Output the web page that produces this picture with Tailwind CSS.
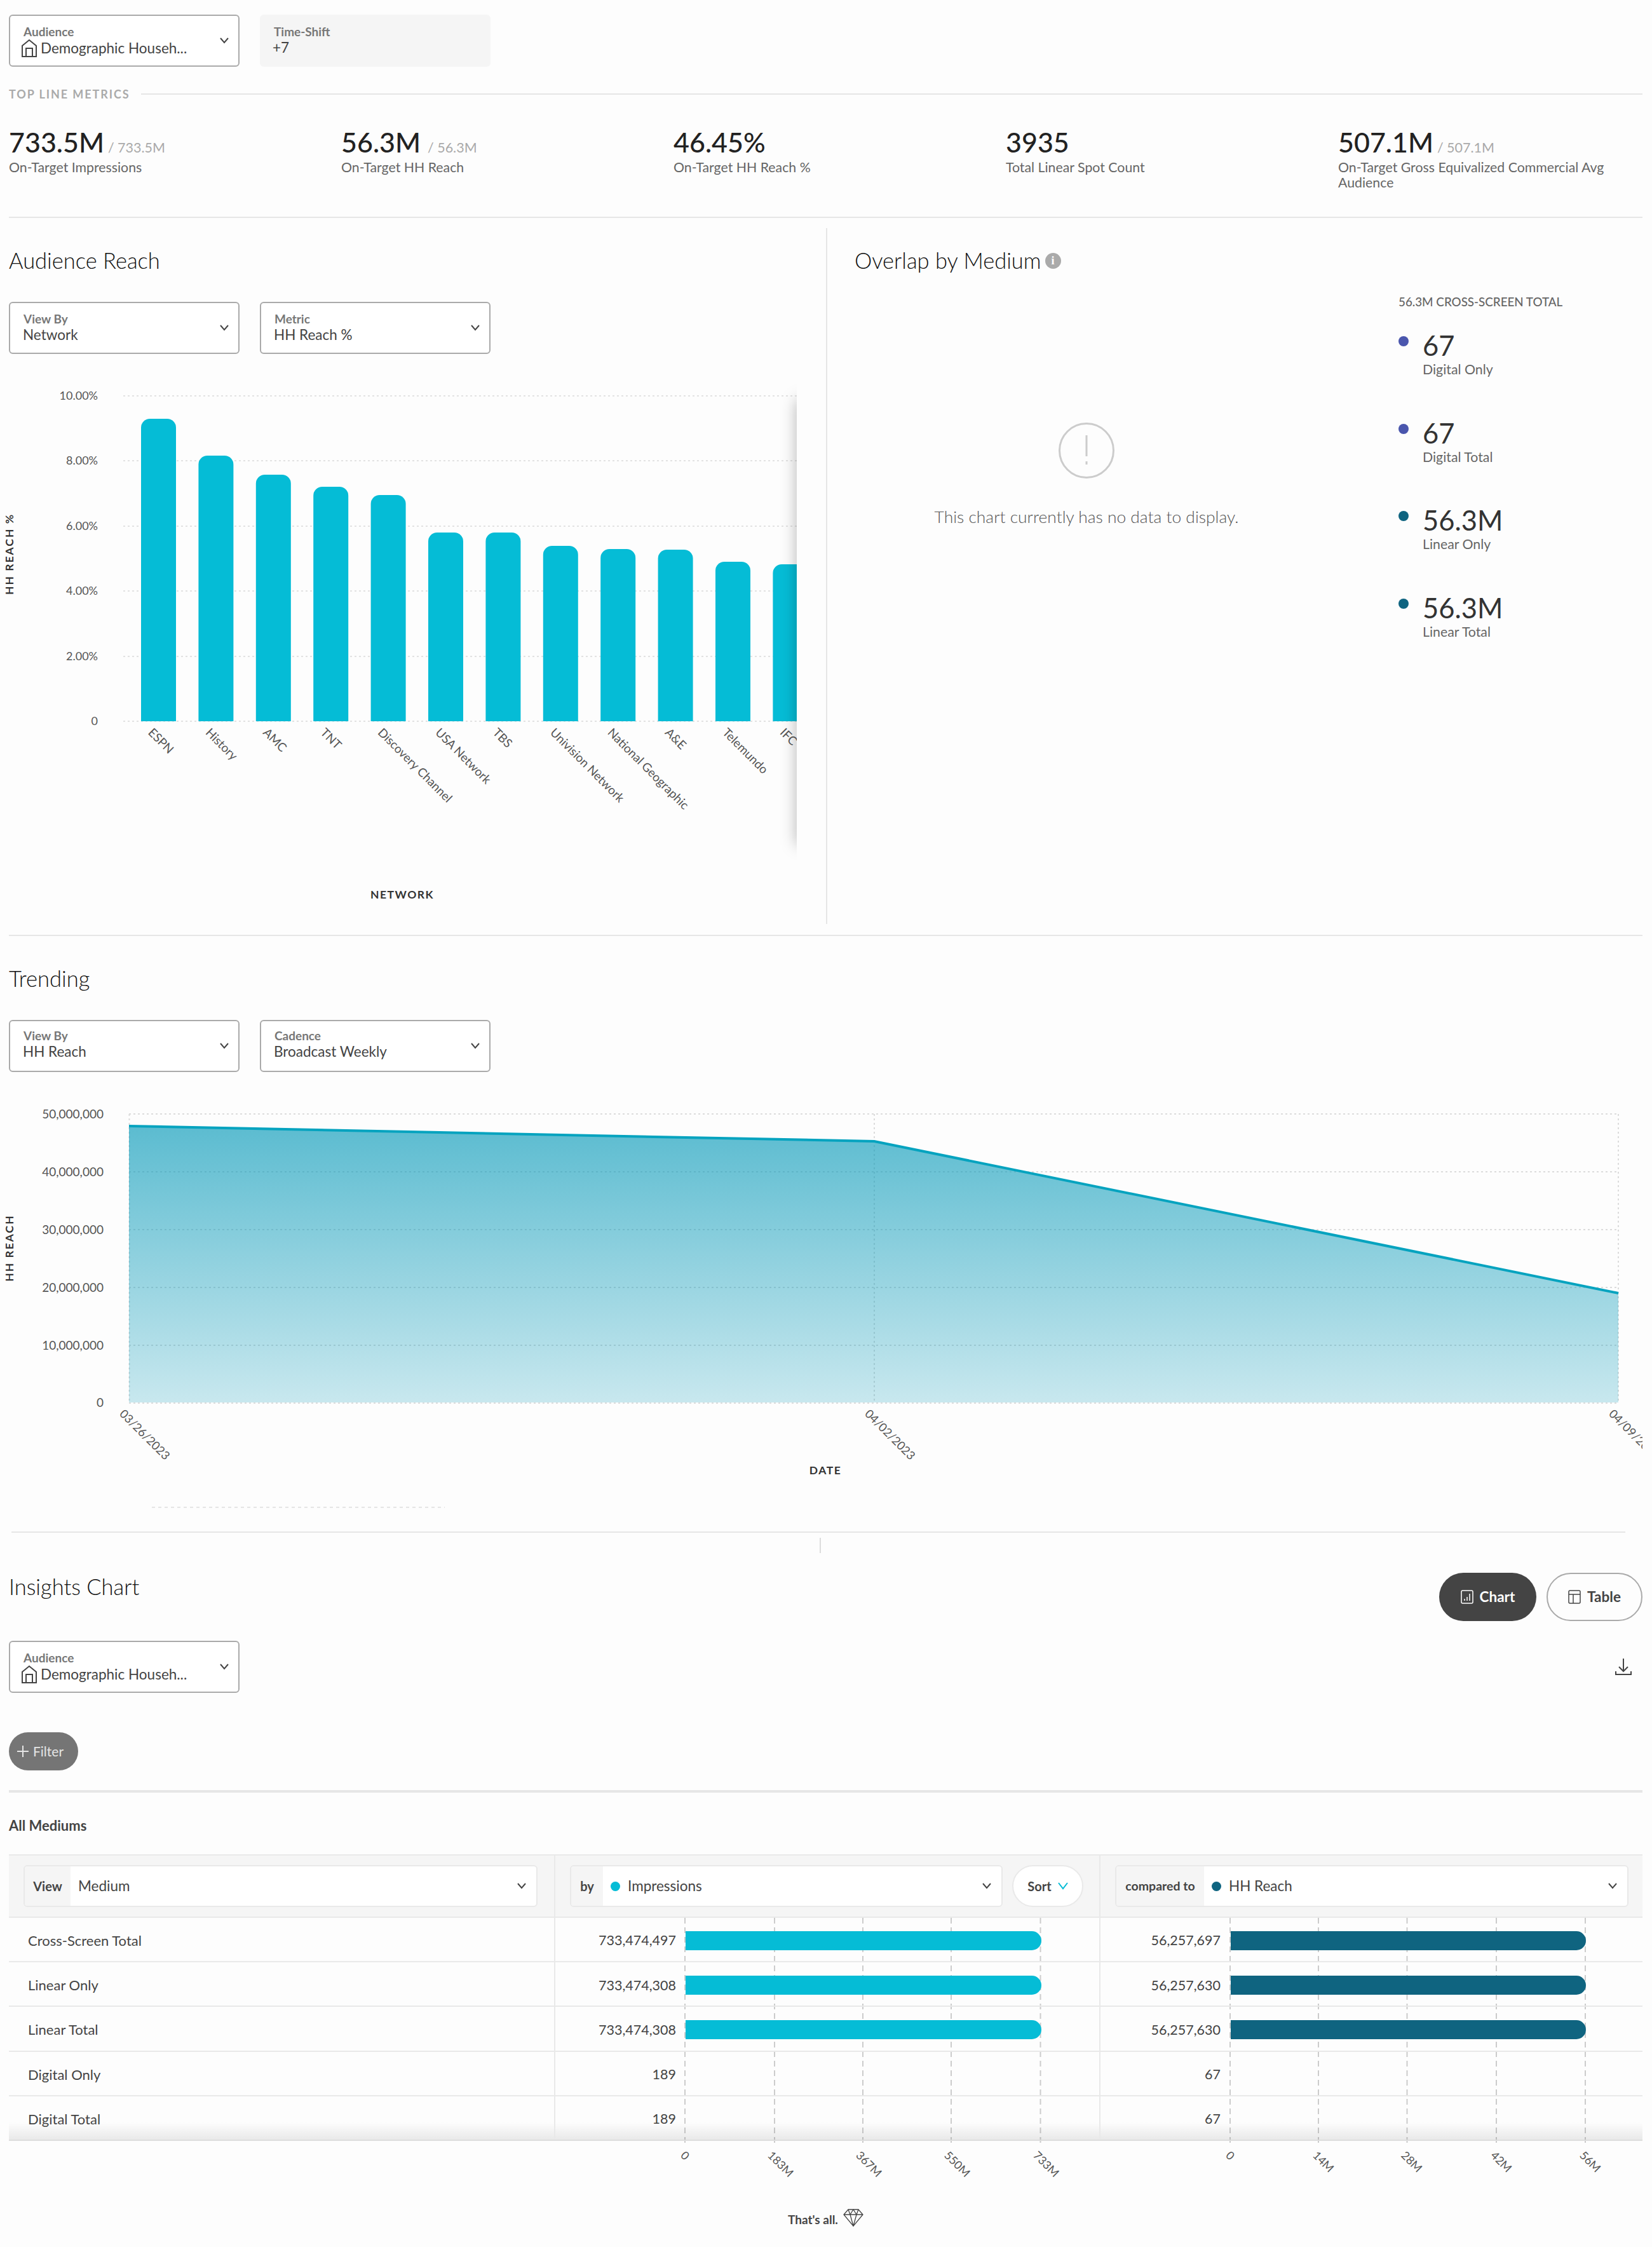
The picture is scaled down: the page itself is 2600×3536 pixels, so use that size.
<!DOCTYPE html>
<html lang="en">
	<head>
		<meta charset="UTF-8" />
		<script src="https://cdn.jsdelivr.net/npm/@tailwindcss/browser@4"></script>
		<title>Campaign Insights</title>
	</head>
	<body class="relative w-[2600px] h-[3536px] overflow-hidden bg-[#fdfdfd] font-['Lato',sans-serif] text-[#444]">
		<div class="w-[2571px] ml-[14px] pt-[23px]">
			<!-- Filters -->
			<div class="flex gap-[32px]">
				<div class="relative w-[363px] h-[82px] border-2 border-[#aaa] rounded-md bg-white pl-[21px] pt-[13px]">
					<p class="text-[19px] leading-[24px] font-bold text-[#777]">Audience</p>
					<div class="flex items-center gap-[5px] -ml-[4px] -mt-[1px]">
						<svg class="w-[26px] h-[30px]" viewBox="0 0 26 30" fill="none" stroke="#444" stroke-width="2"><path d="M2 28V11L13 2l11 9v17zM8 28V15h10v13" /></svg>
						<span class="text-[22.500px] leading-[26px]">Demographic Househ...</span>
					</div>
					<svg class="absolute right-[15px] top-[34px] w-[14px] h-[10px]" viewBox="0 0 14 10" fill="none" stroke="#444" stroke-width="2"><path d="M1 1l6 7 6-7" /></svg>
				</div>
				<div class="w-[363px] h-[82px] rounded-md bg-[#f5f5f5] pl-[22px] pt-[15px]">
					<p class="text-[19px] leading-[24px] font-bold text-[#777]">Time-Shift</p>
					<p class="text-[22.500px] leading-[26px] -ml-[2px]">+7</p>
				</div>
			</div>

			<!-- Top line metrics -->
			<div class="flex items-center gap-[18px] h-[20px] mt-[33px]">
				<span class="text-[18px] font-bold tracking-[1.900px] text-[#aaa]">TOP LINE METRICS</span>
				<div class="flex-1 h-[2px] bg-[#e6e6e6]"></div>
			</div>
			<div class="grid grid-cols-[523px_523px_523px_523px_1fr] h-[185px] pt-[43px] border-b-2 border-[#e6e6e6]">
				<div>
					<p class="text-[43px] leading-[46px] font-medium text-[#222]">733.5M <span class="-ml-[5px] text-[21.500px] leading-none font-normal text-[#aaa]">/ 733.5M</span></p>
					<p class="text-[21.300px] leading-[24px] mt-[4px] text-[#666]">On-Target Impressions</p>
				</div>
				<div>
					<p class="text-[43px] leading-[46px] font-medium text-[#222]">56.3M <span class="text-[21.500px] leading-none font-normal text-[#aaa]">/ 56.3M</span></p>
					<p class="text-[21.300px] leading-[24px] mt-[4px] text-[#666]">On-Target HH Reach</p>
				</div>
				<div>
					<p class="text-[43px] leading-[46px] font-medium text-[#222]">46.45%</p>
					<p class="text-[21.300px] leading-[24px] mt-[4px] text-[#666]">On-Target HH Reach %</p>
				</div>
				<div>
					<p class="text-[43px] leading-[46px] font-medium text-[#222]">3935</p>
					<p class="text-[21.300px] leading-[24px] mt-[4px] text-[#666]">Total Linear Spot Count</p>
				</div>
				<div>
					<p class="text-[43px] leading-[46px] font-medium text-[#222]">507.1M <span class="-ml-[5px] text-[21.500px] leading-none font-normal text-[#aaa]">/ 507.1M</span></p>
					<p class="text-[21.300px] leading-[24px] mt-[4px] text-[#666]">On-Target Gross Equivalized Commercial Avg Audience</p>
				</div>
			</div>

			<!-- Audience reach + overlap -->
			<div class="flex h-[1130px] border-b-2 border-[#e6e6e6]">
				<div class="w-[1286px] pt-[47px]">
					<h2 class="text-[34.500px] leading-[40px] font-light text-[#111]">Audience Reach</h2>
					<div class="flex gap-[32px] mt-[45px]">
						<div class="relative w-[363px] h-[82px] border-2 border-[#aaa] rounded-md bg-white pl-[21px] pt-[13px]">
							<p class="text-[19px] leading-[24px] font-bold text-[#777]">View By</p>
							<p class="text-[22.500px] leading-[26px] -ml-[1px]">Network</p>
							<svg class="absolute right-[15px] top-[34px] w-[14px] h-[10px]" viewBox="0 0 14 10" fill="none" stroke="#444" stroke-width="2"><path d="M1 1l6 7 6-7" /></svg>
						</div>
						<div class="relative w-[363px] h-[82px] border-2 border-[#aaa] rounded-md bg-white pl-[21px] pt-[13px]">
							<p class="text-[19px] leading-[24px] font-bold text-[#777]">Metric</p>
							<p class="text-[22.500px] leading-[26px] -ml-[1px]">HH Reach %</p>
							<svg class="absolute right-[15px] top-[34px] w-[14px] h-[10px]" viewBox="0 0 14 10" fill="none" stroke="#444" stroke-width="2"><path d="M1 1l6 7 6-7" /></svg>
						</div>
					</div>
					<svg class="overflow-visible" width="1286" height="915" viewBox="14 558 1286 915" font-family="Lato, sans-serif">
						<defs>
							<clipPath id="plot"><rect x="14" y="558" width="1240" height="915" /></clipPath>
							<filter id="soft" x="-300%" y="-20%" width="700%" height="140%"><feGaussianBlur stdDeviation="12" /></filter>
						</defs>
						<g stroke="#e2e2e2" stroke-width="2" stroke-dasharray="3 4">
							<path d="M194 624H1254M194 726H1254M194 829H1254M194 931H1254M194 1034H1254M194 1136H1254" />
						</g>
						<g font-size="18" fill="#555" text-anchor="end">
							<text x="154" y="630">10.00%</text>
							<text x="154" y="732">8.00%</text>
							<text x="154" y="835">6.00%</text>
							<text x="154" y="937">4.00%</text>
							<text x="154" y="1040">2.00%</text>
							<text x="154" y="1142">0</text>
						</g>
						<g clip-path="url(#plot)">
							<g fill="#05bcd6">
								<path d="M222 1136V674a14 14 0 0 1 14-14h27a14 14 0 0 1 14 14V1136z" />
								<path d="M312.400 1136V732a14 14 0 0 1 14-14h27a14 14 0 0 1 14 14V1136z" />
								<path d="M402.800 1136V762a14 14 0 0 1 14-14h27a14 14 0 0 1 14 14V1136z" />
								<path d="M493.200 1136V781a14 14 0 0 1 14-14h27a14 14 0 0 1 14 14V1136z" />
								<path d="M583.600 1136V794a14 14 0 0 1 14-14h27a14 14 0 0 1 14 14V1136z" />
								<path d="M674 1136V853a14 14 0 0 1 14-14h27a14 14 0 0 1 14 14V1136z" />
								<path d="M764.400 1136V853a14 14 0 0 1 14-14h27a14 14 0 0 1 14 14V1136z" />
								<path d="M854.800 1136V874a14 14 0 0 1 14-14h27a14 14 0 0 1 14 14V1136z" />
								<path d="M945.200 1136V879a14 14 0 0 1 14-14h27a14 14 0 0 1 14 14V1136z" />
								<path d="M1035.600 1136V880a14 14 0 0 1 14-14h27a14 14 0 0 1 14 14V1136z" />
								<path d="M1126 1136V899a14 14 0 0 1 14-14h27a14 14 0 0 1 14 14V1136z" />
								<path d="M1216.400 1136V903a14 14 0 0 1 14-14h27a14 14 0 0 1 14 14V1136z" />
							</g>
							<g font-size="19" fill="#555">
								<text transform="translate(232 1155) rotate(45)">ESPN</text>
								<text transform="translate(322.400 1155) rotate(45)">History</text>
								<text transform="translate(412.800 1155) rotate(45)">AMC</text>
								<text transform="translate(503.200 1155) rotate(45)">TNT</text>
								<text transform="translate(593.600 1155) rotate(45)">Discovery Channel</text>
								<text transform="translate(684 1155) rotate(45)">USA Network</text>
								<text transform="translate(774.400 1155) rotate(45)">TBS</text>
								<text transform="translate(864.800 1155) rotate(45)">Univision Network</text>
								<text transform="translate(955.200 1155) rotate(45)">National Geographic</text>
								<text transform="translate(1045.600 1155) rotate(45)">A&amp;E</text>
								<text transform="translate(1136 1155) rotate(45)">Telemundo</text>
								<text transform="translate(1226.400 1155) rotate(45)">IFC</text>
							</g>
							<rect x="1254" y="630" width="22" height="700" fill="#000" fill-opacity="0.3" filter="url(#soft)" />
						</g>
						<text x="633" y="1415" font-size="17.500" font-weight="700" letter-spacing="1.500" fill="#333" text-anchor="middle">NETWORK</text>
						<text transform="translate(21 873) rotate(-90)" font-size="17.500" font-weight="700" letter-spacing="2" fill="#333" text-anchor="middle">HH REACH %</text>
					</svg>
				</div>
				<div class="flex mt-[16px] h-[1095px] flex-1 border-l-2 border-[#e6e6e6]">
					<div class="w-[899px] pl-[43px] pt-[31px]">
						<div class="flex items-center gap-[6px]">
							<h2 class="text-[34.500px] leading-[40px] font-light text-[#111]">Overlap by Medium</h2>
							<span class="flex items-center justify-center w-[25px] h-[25px] rounded-full bg-[#aaa] text-white text-[18px] font-bold font-['Liberation_Serif',serif]">i</span>
						</div>
						<div class="flex flex-col items-center w-[730px] mt-[235px]">
							<div class="flex items-center justify-center w-[88px] h-[88px] rounded-full border-[3px] border-[#ccc]">
								<svg class="w-[6px] h-[48px]" viewBox="0 0 6 48" fill="#ccc"><rect x="1.500" y="0" width="3" height="33" /><rect x="1.500" y="41" width="3" height="5" /></svg>
							</div>
							<p class="text-[26.400px] leading-[32px] font-light text-[#555] mt-[44px]">This chart currently has no data to display.</p>
						</div>
					</div>
					<div class="pt-[106px]">
						<p class="text-[18.800px] leading-[20px] font-medium text-[#666]">56.3M CROSS-SCREEN TOTAL</p>
						<div class="flex flex-col mt-[35px]">
							<div class="flex gap-[22px] h-[137.500px]">
								<span class="w-[16px] h-[16px] rounded-full bg-[#4a56ad] mt-[9px]"></span>
								<div><p class="text-[43.500px] leading-[46px] text-[#333]">67</p><p class="text-[21.300px] leading-[24px] mt-[3px] text-[#666]">Digital Only</p></div>
							</div>
							<div class="flex gap-[22px] h-[137.500px]">
								<span class="w-[16px] h-[16px] rounded-full bg-[#4a56ad] mt-[9px]"></span>
								<div><p class="text-[43.500px] leading-[46px] text-[#333]">67</p><p class="text-[21.300px] leading-[24px] mt-[3px] text-[#666]">Digital Total</p></div>
							</div>
							<div class="flex gap-[22px] h-[137.500px]">
								<span class="w-[16px] h-[16px] rounded-full bg-[#0f6480] mt-[9px]"></span>
								<div><p class="text-[43.500px] leading-[46px] text-[#333]">56.3M</p><p class="text-[21.300px] leading-[24px] mt-[3px] text-[#666]">Linear Only</p></div>
							</div>
							<div class="flex gap-[22px] h-[137.500px]">
								<span class="w-[16px] h-[16px] rounded-full bg-[#0f6480] mt-[9px]"></span>
								<div><p class="text-[43.500px] leading-[46px] text-[#333]">56.3M</p><p class="text-[21.300px] leading-[24px] mt-[3px] text-[#666]">Linear Total</p></div>
							</div>
						</div>
					</div>
				</div>
			</div>

			<!-- Trending -->
			<div class="pt-[47px]">
				<h2 class="text-[34.500px] leading-[40px] font-light text-[#111]">Trending</h2>
				<div class="flex gap-[32px] mt-[45px]">
					<div class="relative w-[363px] h-[82px] border-2 border-[#aaa] rounded-md bg-white pl-[21px] pt-[11px]">
						<p class="text-[19px] leading-[24px] font-bold text-[#777]">View By</p>
						<p class="text-[22.500px] leading-[26px] -ml-[1px]">HH Reach</p>
						<svg class="absolute right-[15px] top-[34px] w-[14px] h-[10px]" viewBox="0 0 14 10" fill="none" stroke="#444" stroke-width="2"><path d="M1 1l6 7 6-7" /></svg>
					</div>
					<div class="relative w-[363px] h-[82px] border-2 border-[#aaa] rounded-md bg-white pl-[21px] pt-[11px]">
						<p class="text-[19px] leading-[24px] font-bold text-[#777]">Cadence</p>
						<p class="text-[22.500px] leading-[26px] -ml-[1px]">Broadcast Weekly</p>
						<svg class="absolute right-[15px] top-[34px] w-[14px] h-[10px]" viewBox="0 0 14 10" fill="none" stroke="#444" stroke-width="2"><path d="M1 1l6 7 6-7" /></svg>
					</div>
				</div>
				<svg class="block overflow-visible" width="2571" height="723" viewBox="14 1687 2571 723" font-family="Lato, sans-serif">
					<defs>
						<linearGradient id="area" gradientUnits="userSpaceOnUse" x1="0" y1="1772" x2="0" y2="2207">
							<stop offset="0" stop-color="#0097b7" stop-opacity="0.64" />
							<stop offset="1" stop-color="#0097b7" stop-opacity="0.21" />
						</linearGradient>
						<clipPath id="pagewidth"><rect x="0" y="1687" width="2585" height="723" /></clipPath>
					</defs>
					<g stroke="#dcdcdc" stroke-width="2" stroke-dasharray="3 4" fill="none">
						<path d="M203 1753H2547M203 1844H2547M203 1935H2547M203 2026H2547M203 2117H2547M203 2208H2547" />
						<path d="M203.500 1753V2208M1376 1753V2208M2547 1753V2208" />
					</g>
					<path d="M203 1772L1376 1796L2547 2035V2207H203z" fill="url(#area)" />
					<path d="M203 1772L1376 1796L2547 2035" fill="none" stroke="#05a3bf" stroke-width="4" />
					<g font-size="19" fill="#555" text-anchor="end">
						<text x="163" y="1760">50,000,000</text>
						<text x="163" y="1851">40,000,000</text>
						<text x="163" y="1942">30,000,000</text>
						<text x="163" y="2033">20,000,000</text>
						<text x="163" y="2124">10,000,000</text>
						<text x="163" y="2214">0</text>
					</g>
					<g font-size="18.500" fill="#555" clip-path="url(#pagewidth)">
						<text transform="translate(187 2226) rotate(45)">03/26/2023</text>
						<text transform="translate(1360 2226) rotate(45)">04/02/2023</text>
						<text transform="translate(2531 2226) rotate(45)">04/09/2023</text>
					</g>
					<text x="1299" y="2320" font-size="17.500" font-weight="700" letter-spacing="1.500" fill="#333" text-anchor="middle">DATE</text>
					<text transform="translate(21 1964) rotate(-90)" font-size="17.500" font-weight="700" letter-spacing="2" fill="#333" text-anchor="middle">HH REACH</text>
					<path d="M239 2372H700" stroke="#ddd" stroke-width="1.500" stroke-dasharray="5 5" />
				</svg>
			</div>

			<!-- Insights chart -->
			<div class="ml-[4px] w-[2540px] h-[2px] bg-[#e6e6e6]"></div>
			<div class="relative">
				<div class="absolute left-[1276px] top-[8px] w-[2px] h-[24px] bg-[#ddd]"></div>
				<div class="flex items-start justify-between pt-[63px]">
					<h2 class="text-[34.500px] leading-[40px] font-light text-[#111] mt-[2px]">Insights Chart</h2>
					<div class="flex gap-[16px]">
						<div class="flex items-center justify-center gap-[10px] w-[153px] h-[76px] rounded-full bg-[#444] text-white text-[22.500px] font-bold">
							<svg class="w-[20px] h-[22px]" viewBox="0 0 20 22" fill="none" stroke="#fff" stroke-width="1.500"><rect x="1" y="1" width="18" height="20" rx="2" /><path d="M6 17v-3M10 17v-6M14 17V6" /></svg>
							<span>Chart</span>
						</div>
						<div class="flex items-center justify-center gap-[10px] w-[151px] h-[76px] rounded-full border-2 border-[#aaa] text-[22.500px] font-bold">
							<svg class="w-[20px] h-[22px]" viewBox="0 0 20 22" fill="none" stroke="#444" stroke-width="1.500"><rect x="1" y="1" width="18" height="20" rx="2" /><path d="M1 7h18M8 7v14" /></svg>
							<span>Table</span>
						</div>
					</div>
				</div>
				<div class="flex items-center justify-between mt-[31px]">
					<div class="relative w-[363px] h-[82px] border-2 border-[#aaa] rounded-md bg-white pl-[21px] pt-[13px]">
						<p class="text-[19px] leading-[24px] font-bold text-[#777]">Audience</p>
						<div class="flex items-center gap-[5px] -ml-[4px] -mt-[1px]">
							<svg class="w-[26px] h-[30px]" viewBox="0 0 26 30" fill="none" stroke="#444" stroke-width="2"><path d="M2 28V11L13 2l11 9v17zM8 28V15h10v13" /></svg>
							<span class="text-[22.500px] leading-[26px]">Demographic Househ...</span>
						</div>
						<svg class="absolute right-[15px] top-[34px] w-[14px] h-[10px]" viewBox="0 0 14 10" fill="none" stroke="#444" stroke-width="2"><path d="M1 1l6 7 6-7" /></svg>
					</div>
					<svg class="w-[28px] h-[28px] mr-[16px]" viewBox="0 0 28 28" fill="none" stroke="#444" stroke-width="2"><path d="M14 1v20M7 14l7 7 7-7M2 21v5h24v-5" /></svg>
				</div>
				<div class="flex items-center gap-[7px] w-[109px] h-[60px] mt-[62px] pl-[13px] rounded-full bg-[#757575] text-[#e5e5e5] text-[21px]">
					<svg class="w-[18px] h-[18px]" viewBox="0 0 18 18" stroke="#e5e5e5" stroke-width="2"><path d="M9 0v18M0 9h18" /></svg>
					<span>Filter</span>
				</div>
				<div class="h-[4px] bg-[#e6e6e6] mt-[31px]"></div>
				<p class="text-[22px] leading-[24px] font-bold text-[#444] mt-[40px]">All Mediums</p>

				<!-- Table -->
				<div class="mt-[33px]">
					<div class="grid grid-cols-[858px_858px_855px] h-[100px] bg-[#f5f5f5] border-y-2 border-[#e9e9e9]">
						<div class="flex items-center pl-[23px]">
							<div class="flex w-[809px] h-[66px] rounded-md border-2 border-[#e9e9e9] bg-white overflow-hidden">
								<span class="flex items-center justify-center w-[72px] bg-[#f5f5f5] text-[20px] font-bold">View</span>
								<span class="flex flex-1 items-center pl-[12px] text-[22.500px]">Medium</span>
								<svg class="self-center w-[14px] h-[10px] mr-[16px]" viewBox="0 0 14 10" fill="none" stroke="#444" stroke-width="2"><path d="M1 1l6 7 6-7" /></svg>
							</div>
						</div>
						<div class="flex items-center gap-[15px] pl-[23px] border-l-2 border-[#e9e9e9]">
							<div class="flex w-[681px] h-[66px] rounded-md border-2 border-[#e9e9e9] bg-white overflow-hidden">
								<span class="flex items-center justify-center w-[50px] bg-[#f5f5f5] text-[20px] font-bold">by</span>
								<span class="flex flex-1 items-center gap-[12px] pl-[12px] text-[22.500px]"><i class="w-[15px] h-[15px] rounded-full bg-[#05bcd6]"></i>Impressions</span>
								<svg class="self-center w-[14px] h-[10px] mr-[16px]" viewBox="0 0 14 10" fill="none" stroke="#444" stroke-width="2"><path d="M1 1l6 7 6-7" /></svg>
							</div>
							<div class="flex items-center justify-center gap-[10px] w-[112px] h-[66px] rounded-full border-2 border-[#e9e9e9] bg-white text-[20px] font-bold">
								<span>Sort</span>
								<svg class="w-[16px] h-[12px]" viewBox="0 0 16 12" fill="none" stroke="#05bcd6" stroke-width="2"><path d="M1 1l7 9 7-9" /></svg>
							</div>
						</div>
						<div class="flex items-center pl-[23px] border-l-2 border-[#e9e9e9]">
							<div class="flex w-[808px] h-[66px] rounded-md border-2 border-[#e9e9e9] bg-white overflow-hidden">
								<span class="flex items-center justify-center w-[138px] bg-[#f5f5f5] text-[19.500px] font-bold">compared to</span>
								<span class="flex flex-1 items-center gap-[12px] pl-[12px] text-[22.500px]"><i class="w-[15px] h-[15px] rounded-full bg-[#0f6480]"></i>HH Reach</span>
								<svg class="self-center w-[14px] h-[10px] mr-[16px]" viewBox="0 0 14 10" fill="none" stroke="#444" stroke-width="2"><path d="M1 1l6 7 6-7" /></svg>
							</div>
						</div>
					</div>

					<div class="relative">
						<!-- Dashed axes and their tick labels sit behind the rows -->
						<svg class="absolute left-0 top-0" width="2571" height="420" viewBox="14 3018 2571 420" font-family="Lato, sans-serif">
							<g stroke="#ccc" stroke-width="2" stroke-dasharray="9 6">
								<path d="M1078 3018V3377M1219 3018V3377M1358 3018V3377M1497 3018V3377M1637.500 3018V3377" />
								<path d="M1936 3018V3377M2075 3018V3377M2214.500 3018V3377M2355 3018V3377M2495 3018V3377" />
							</g>
							<g font-size="18" fill="#555">
								<text transform="translate(1070 3393) rotate(45)">0</text>
								<text transform="translate(1207 3393) rotate(45)">183M</text>
								<text transform="translate(1346 3393) rotate(45)">367M</text>
								<text transform="translate(1485 3393) rotate(45)">550M</text>
								<text transform="translate(1625 3393) rotate(45)">733M</text>
								<text transform="translate(1928 3393) rotate(45)">0</text>
								<text transform="translate(2065 3393) rotate(45)">14M</text>
								<text transform="translate(2204 3393) rotate(45)">28M</text>
								<text transform="translate(2345 3393) rotate(45)">42M</text>
								<text transform="translate(2485 3393) rotate(45)">56M</text>
							</g>
						</svg>
						<div class="relative text-[21.500px] text-[#444]">
							<div class="grid grid-cols-[858px_858px_855px] h-[70.200px] border-b-2 border-[#e9e9e9]">
								<div class="flex items-center pl-[30px] pt-[3px] text-[22px]">Cross-Screen Total</div>
								<div class="flex items-center pt-[3px] border-l-2 border-[#e9e9e9]"><span class="w-[190px] text-right">733,474,497</span><i class="ml-[15px] w-[560px] h-[30px] rounded-r-full bg-[#05bcd6]"></i></div>
								<div class="flex items-center pt-[3px] border-l-2 border-[#e9e9e9]"><span class="w-[189px] text-right">56,257,697</span><i class="ml-[16px] w-[559px] h-[30px] rounded-r-full bg-[#0f6480]"></i></div>
							</div>
							<div class="grid grid-cols-[858px_858px_855px] h-[70.200px] border-b-2 border-[#e9e9e9]">
								<div class="flex items-center pl-[30px] pt-[3px] text-[22px]">Linear Only</div>
								<div class="flex items-center pt-[3px] border-l-2 border-[#e9e9e9]"><span class="w-[190px] text-right">733,474,308</span><i class="ml-[15px] w-[560px] h-[30px] rounded-r-full bg-[#05bcd6]"></i></div>
								<div class="flex items-center pt-[3px] border-l-2 border-[#e9e9e9]"><span class="w-[189px] text-right">56,257,630</span><i class="ml-[16px] w-[559px] h-[30px] rounded-r-full bg-[#0f6480]"></i></div>
							</div>
							<div class="grid grid-cols-[858px_858px_855px] h-[70.200px] border-b-2 border-[#e9e9e9]">
								<div class="flex items-center pl-[30px] pt-[3px] text-[22px]">Linear Total</div>
								<div class="flex items-center pt-[3px] border-l-2 border-[#e9e9e9]"><span class="w-[190px] text-right">733,474,308</span><i class="ml-[15px] w-[560px] h-[30px] rounded-r-full bg-[#05bcd6]"></i></div>
								<div class="flex items-center pt-[3px] border-l-2 border-[#e9e9e9]"><span class="w-[189px] text-right">56,257,630</span><i class="ml-[16px] w-[559px] h-[30px] rounded-r-full bg-[#0f6480]"></i></div>
							</div>
							<div class="grid grid-cols-[858px_858px_855px] h-[70.200px] border-b-2 border-[#e9e9e9]">
								<div class="flex items-center pl-[30px] pt-[3px] text-[22px]">Digital Only</div>
								<div class="flex items-center pt-[3px] border-l-2 border-[#e9e9e9]"><span class="w-[190px] text-right">189</span></div>
								<div class="flex items-center pt-[3px] border-l-2 border-[#e9e9e9]"><span class="w-[189px] text-right">67</span></div>
							</div>
							<div class="grid grid-cols-[858px_858px_855px] h-[70.200px] border-b-2 border-[#ddd] bg-gradient-to-b from-transparent from-60% to-black/8">
								<div class="flex items-center pl-[30px] pt-[3px] text-[22px]">Digital Total</div>
								<div class="flex items-center pt-[3px] border-l-2 border-[#e9e9e9]"><span class="w-[190px] text-right">189</span></div>
								<div class="flex items-center pt-[3px] border-l-2 border-[#e9e9e9]"><span class="w-[189px] text-right">67</span></div>
							</div>
						</div>
					</div>
				</div>

				<div class="flex items-center gap-[8px] pl-[1226px] mt-[110px] text-[19px] font-bold">
					<span>That's all.</span>
					<svg class="w-[32px] h-[28px] -mt-[6px]" viewBox="0 0 32 28" fill="none" stroke="#444" stroke-width="1.300"><path d="M8 1h16l7 8-15 18L1 9zM1 9h30M8 1l3 8 5 18 5-18 3-8M11 9l5-8 5 8" /></svg>
				</div>
			</div>
		</div>
	</body>
</html>
